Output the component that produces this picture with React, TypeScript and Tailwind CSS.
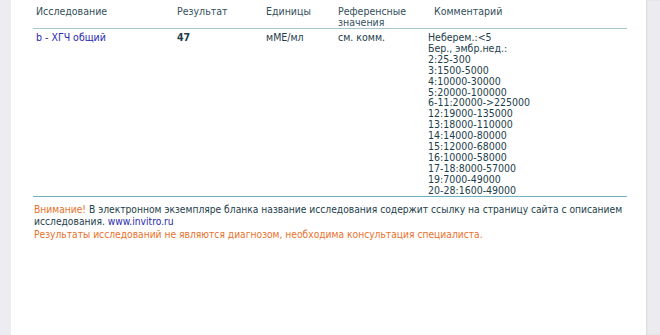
import React from "react";

const comments = [
  "Неберем.:<5",
  "Бер., эмбр.нед.:",
  "2:25-300",
  "3:1500-5000",
  "4:10000-30000",
  "5:20000-100000",
  "6-11:20000->225000",
  "12:19000-135000",
  "13:18000-110000",
  "14:14000-80000",
  "15:12000-68000",
  "16:10000-58000",
  "17-18:8000-57000",
  "19:7000-49000",
  "20-28:1600-49000",
];

const App: React.FC = () => {
  return (
    <div className="flex h-[335px] w-[660px] overflow-hidden bg-[#f0f0f4] font-['DejaVu_Sans_Condensed',sans-serif]">
      {/* Left gutter */}
      <div className="w-[11px] shrink-0 bg-[#ededf1] shadow-[1px_0_3px_rgba(0,0,0,0.12)]" />

      {/* Page */}
      <div className="w-[635px] shrink-0 bg-white pl-[22px] pr-[20px] text-[10.5px] leading-[11px] text-[#1d3e4c]">
        <table className="w-[594px] table-fixed border-collapse">
          <colgroup>
            <col className="w-[144px]" />
            <col className="w-[89px]" />
            <col className="w-[72px]" />
            <col className="w-[90px]" />
            <col />
          </colgroup>
          <thead>
            <tr className="border-b border-[#a8c6cf] align-top text-[#33505c]">
              <th className="pb-[3px] pl-[3px] pt-[6px] text-left font-normal">Исследование</th>
              <th className="pt-[6px] text-left font-normal">Результат</th>
              <th className="pt-[6px] text-left font-normal">Единицы</th>
              <th className="pt-[6px] text-left font-normal">
                Референсные
                <br />
                значения
              </th>
              <th className="pl-[6px] pt-[6px] text-left font-normal">Комментарий</th>
            </tr>
          </thead>
          <tbody>
            <tr className="border-b border-[#6eb3c1] align-top">
              <td className="pl-[3px] pt-[3px] text-[#2a2ab0]">b - ХГЧ общий</td>
              <td className="pt-[3px] font-bold">47</td>
              <td className="pt-[3px]">мМЕ/мл</td>
              <td className="pt-[3px]">см. комм.</td>
              <td className="pt-[3px] leading-[10.9px]">
                {comments.map((c) => (
                  <div key={c}>{c}</div>
                ))}
              </td>
            </tr>
          </tbody>
        </table>

        <div className="mt-[7px] pl-[1px] text-[10.2px] leading-[12.5px]">
          <p>
            <span className="text-[#e8712c]">Внимание!</span> В электронном экземпляре бланка название исследования
            содержит ссылку на страницу сайта с описанием исследования.{" "}
            <a className="text-[#2a2ab0]">www.invitro.ru</a>
          </p>
          <p className="text-[#e8712c]">
            Результаты исследований не являются диагнозом, необходима консультация специалиста.
          </p>
        </div>
      </div>

      {/* Right gutter */}
      <div className="flex-1 bg-[#ececf0] shadow-[inset_1px_0_2px_rgba(0,0,0,0.08)]" />
    </div>
  );
};

export default App;
